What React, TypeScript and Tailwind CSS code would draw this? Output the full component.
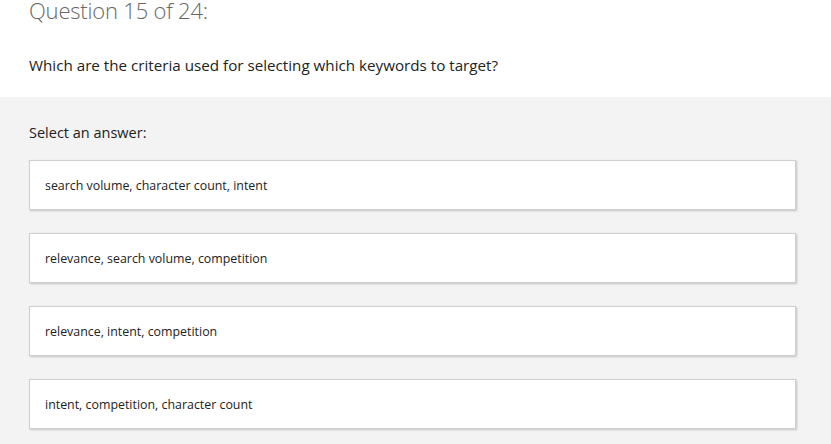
import React from "react";

const answers = [
  "search volume, character count, intent",
  "relevance, search volume, competition",
  "relevance, intent, competition",
  "intent, competition, character count",
];

export default function App() {
  return (
    <div className="w-[831px] h-[444px] overflow-hidden bg-[#f3f3f3]" style={{ fontFamily: '"Open Sans", "Noto Sans", sans-serif' }}>
      <div className="bg-white h-[97px] px-[29px] flex flex-col">
        <h1 className="text-[22px] leading-[20px] font-light text-[#666] tracking-[-0.2px]">Question 15 of 24:</h1>
        <p className="text-[15.2px] leading-[20px] text-[#222] mt-[35px]">Which are the criteria used for selecting which keywords to target?</p>
      </div>
      <div className="px-[29px] pt-[26px]">
        <p className="text-[14.5px] leading-[20px] text-[#222]">Select an answer:</p>
        <div className="mt-[17px] flex flex-col gap-[23px] w-[767px]">
          {answers.map((a) => (
            <div key={a} className="h-[50px] bg-white border border-[#cfcfcf] shadow-[1px_1px_2px_rgba(0,0,0,0.2)] flex items-center pl-[15px] pt-[3px] text-[12.4px] text-[#222]">
              {a}
            </div>
          ))}
        </div>
      </div>
    </div>
  );
}
